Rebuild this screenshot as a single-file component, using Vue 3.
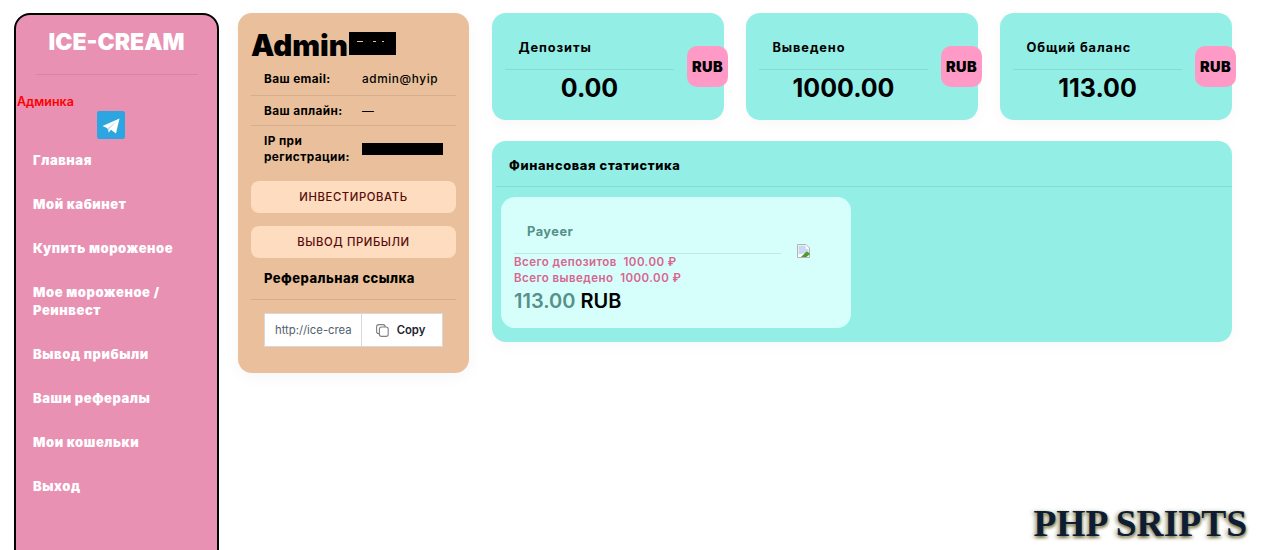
<script setup>
// Dashboard of the ICE-CREAM cabinet
const menu = [
  'Главная',
  'Мой кабинет',
  'Купить мороженое',
  'Мое мороженое / Реинвест',
  'Вывод прибыли',
  'Ваши рефералы',
  'Мои кошельки',
  'Выход',
];

const totals = [
  { label: 'Депозиты', value: '0.00' },
  { label: 'Выведено', value: '1000.00' },
  { label: 'Общий баланс', value: '113.00' },
];
</script>

<template>
  <div class="page">
    <aside class="sidebar">
      <div class="logo">ICE-CREAM</div>
      <div class="logo-line"></div>
      <div class="admin-link">Админка</div>
      <div class="tg-wrap">
        <span class="tg">
          <svg viewBox="0 0 28 28" width="28" height="28">
            <path d="M5.500 15 22.500 7.500 19 22.500 14 18.800 11.800 21.500 10.500 17.300Z" fill="#fff" />
            <path d="M10.500 17.300 20 10 12.500 17.800 11.800 21.500Z" fill="#bfdff2" />
          </svg>
        </span>
      </div>
      <nav class="menu">
        <a v-for="item in menu" :key="item" class="menu-item">{{ item }}</a>
      </nav>
    </aside>

    <section class="profile">
      <h2 class="profile-name">Admin<span class="redact-name"></span></h2>
      <div class="info-row first">
        <div class="info-key">Ваш email:</div>
        <div class="info-val">admin@hyip</div>
      </div>
      <div class="info-row">
        <div class="info-key">Ваш аплайн:</div>
        <div class="info-val">—</div>
      </div>
      <div class="info-row last">
        <div class="info-key">IP при регистрации:</div>
        <div class="info-val"><span class="redact-ip"></span></div>
      </div>
      <button class="action">ИНВЕСТИРОВАТЬ</button>
      <button class="action">ВЫВОД ПРИБЫЛИ</button>
      <div class="ref-title">Реферальная ссылка</div>
      <div class="ref-box">
        <div class="ref-group">
          <div class="ref-input">http://ice-crea</div>
          <div class="ref-copy">
            <svg viewBox="0 0 13 13" width="13" height="13" fill="none" stroke="#808080" stroke-width="1.100">
              <rect x="0.600" y="0.600" width="8.500" height="9" rx="2.200" />
              <rect x="3.400" y="3" width="8.800" height="9.400" rx="2.200" fill="#fff" />
            </svg>
            <span>Copy</span>
          </div>
        </div>
      </div>
    </section>

    <main class="content">
      <div class="totals">
        <div v-for="t in totals" :key="t.label" class="total-card">
          <div class="total-label">{{ t.label }}</div>
          <div class="total-value">{{ t.value }}</div>
          <div class="rub-badge">RUB</div>
        </div>
      </div>

      <div class="stats">
        <div class="stats-title">Финансовая статистика</div>
        <div class="stats-body">
          <div class="pay-card">
            <div class="pay-main">
              <div class="pay-name">Payeer</div>
              <div class="pay-line">Всего депозитов&nbsp; 100.00 ₽</div>
              <div class="pay-line">Всего выведено&nbsp; 1000.00 ₽</div>
              <div class="pay-sum"><span class="pay-amount">113.00</span> RUB</div>
            </div>
            <svg class="broken" viewBox="0 0 13 14" width="13" height="14">
              <path d="M.5.5h8.500l3.500 3.500v9.500H.5Z" fill="#fff" stroke="#b4b4b4" />
              <path d="M1.500 1.500h7l.5 3.500h2.500v3.500l-10 2Z" fill="#c9d8f4" />
              <path d="M4 13 9.500 7.500l3 1.500v1.500L9.500 13Z" fill="#4f9a32" />
            </svg>
          </div>
        </div>
      </div>
    </main>

    <div class="watermark">PHP SRIPTS</div>
  </div>
</template>

<style>
html, body {
  margin: 0;
  background: #fff;
  overflow: hidden;
}
</style>

<style scoped>
.page {
  position: relative;
  display: flex;
  align-items: flex-start;
  height: 550px;
  overflow: hidden;
  padding: 13px 33px 0 14px;
  box-sizing: border-box;
  font-family: "Inter", "Liberation Sans", sans-serif;
  color: #000;
}

/* sidebar */
.sidebar {
  flex: none;
  width: 205px;
  height: 600px;
  box-sizing: border-box;
  border: 2px solid #000;
  border-radius: 16px;
  background: #e891b3;
}
.logo {
  margin-top: 14px;
  text-align: center;
  font-size: 23px;
  line-height: 26px;
  font-weight: 900;
  color: #fff;
}
.logo-line {
  height: 1px;
  margin: 19px 19px 0 20px;
  background: rgba(0, 0, 0, 0.08);
}
.admin-link {
  margin-top: 20px;
  padding-left: 1px;
  font-size: 12.500px;
  line-height: 14px;
  font-weight: 600;
  color: #f00;
}
.tg-wrap {
  display: flex;
  justify-content: center;
  margin-top: 2px;
  padding-right: 11px;
}
.tg {
  display: block;
  width: 28px;
  height: 28px;
  border-radius: 2px;
  background: #2ca5e0;
}
.tg svg {
  display: block;
}
.menu {
  display: flex;
  flex-direction: column;
  margin-top: -1px;
}
.menu-item {
  padding: 13px 17px;
  font-size: 13px;
  line-height: 18px;
  font-weight: 900;
  letter-spacing: 0.55px;
  color: #fff;
}

/* profile */
.profile {
  flex: none;
  width: 231px;
  height: 360px;
  margin-left: 19px;
  padding: 0 13px;
  box-sizing: border-box;
  border-radius: 14px;
  background: #e9c09b;
  box-shadow: 0 4px 16px rgba(0, 0, 0, 0.04);
}
.profile-name {
  margin: 17px 0 0;
  height: 34px;
  font-size: 29.500px;
  line-height: 30px;
  font-weight: 900;
  white-space: nowrap;
  display: flex;
  align-items: flex-start;
}
.redact-name {
  display: block;
  flex: none;
  width: 47px;
  height: 23px;
  margin: 2px 0 0 1px;
  background:
    linear-gradient(90deg, transparent 8px, #e9c09b 8px, #e9c09b 14px, transparent 14px, transparent 24px, #e9c09b 24px, #e9c09b 27px, transparent 27px, transparent 33px, #e9c09b 33px, #e9c09b 35px, transparent 35px) 0 9px / 100% 1px no-repeat,
    #000;
}
.info-row {
  display: flex;
  align-items: center;
  padding: 7px 0 6px 13px;
  border-bottom: 1px solid rgba(0, 0, 0, 0.09);
  font-size: 11.800px;
  line-height: 16px;
}
.info-row.first {
  padding-bottom: 8px;
}
.info-row.last {
  padding-bottom: 16px;
  border-bottom: 0;
}
.info-key {
  flex: none;
  width: 98px;
  font-weight: 700;
  letter-spacing: 0.4px;
}
.info-val {
  flex: 1;
  font-weight: 500;
  letter-spacing: 0.6px;
  white-space: nowrap;
}
.redact-ip {
  display: block;
  width: 81px;
  height: 12px;
  background: #000;
}
.action {
  display: block;
  width: 100%;
  height: 32px;
  margin-bottom: 13px;
  border: 0;
  border-radius: 8px;
  background: #fddcbf;
  color: #570b0b;
  font-family: inherit;
  font-size: 11.300px;
  font-weight: 500;
  letter-spacing: 0.6px;
}
.ref-title {
  padding: 0 13px 12px;
  margin-top: -1px;
  border-bottom: 1px solid rgba(0, 0, 0, 0.09);
  font-size: 13px;
  line-height: 17px;
  font-weight: 800;
  letter-spacing: 0.45px;
}
.ref-box {
  padding: 13px 13px 0;
}
.ref-group {
  display: flex;
  height: 34px;
  box-sizing: border-box;
  border: 1px solid #d5d9de;
  background: #fff;
}
.ref-input {
  flex: none;
  width: 97px;
  padding: 0 0 0 10px;
  box-sizing: border-box;
  border-right: 1px solid #d5d9de;
  font-size: 11.300px;
  line-height: 32px;
  color: #51606e;
  white-space: nowrap;
}
.ref-copy {
  flex: 1;
  display: flex;
  align-items: center;
  justify-content: center;
  gap: 8px;
  padding-right: 3px;
  font-size: 11.300px;
  font-weight: 600;
  color: #1b2530;
}

/* right column */
.content {
  flex: 1;
  min-width: 0;
  margin-left: 23px;
}
.totals {
  display: flex;
  gap: 22px;
}
.total-card {
  position: relative;
  flex: 1;
  height: 107px;
  padding: 0 13px;
  box-sizing: border-box;
  border-radius: 14px;
  background: #93eee6;
  box-shadow: 0 4px 16px rgba(0, 0, 0, 0.03);
}
.total-label {
  margin-right: 37px;
  padding: 27px 13px 13px 13.500px;
  border-bottom: 1px solid rgba(0, 0, 0, 0.08);
  font-size: 12.800px;
  line-height: 16px;
  font-weight: 700;
  letter-spacing: 0.9px;
  white-space: nowrap;
}
.total-value {
  margin-right: 37px;
  padding-top: 3px;
  text-align: center;
  font-size: 25px;
  line-height: 30px;
  font-weight: 700;
}
.rub-badge {
  position: absolute;
  top: 33px;
  right: -4px;
  width: 41px;
  height: 41px;
  display: flex;
  align-items: center;
  justify-content: center;
  border-radius: 10px;
  background: #fe9ac5;
  font-size: 14.500px;
  font-weight: 900;
  letter-spacing: 0.4px;
}
.stats {
  height: 201px;
  margin-top: 21px;
  box-sizing: border-box;
  border-radius: 14px;
  background: #93eee6;
  box-shadow: 0 4px 16px rgba(0, 0, 0, 0.03);
}
.stats-title {
  height: 46px;
  padding: 17px 17px 0 13px;
  margin-left: 4px;
  box-sizing: border-box;
  border-bottom: 1px solid rgba(0, 0, 0, 0.08);
  font-size: 12.800px;
  line-height: 16px;
  font-weight: 800;
  letter-spacing: 0.65px;
}
.stats-body {
  padding: 10px 9px 0;
}
.pay-card {
  display: flex;
  align-items: flex-start;
  width: 350px;
  height: 131px;
  box-sizing: border-box;
  padding: 0 13px;
  border-radius: 14px;
  background: #d6fffb;
}
.pay-main {
  flex: none;
  width: 267px;
}
.pay-name {
  height: 57px;
  padding: 27px 13px 0;
  box-sizing: border-box;
  border-bottom: 1px solid rgba(0, 0, 0, 0.09);
  font-size: 12.800px;
  line-height: 16px;
  font-weight: 700;
  letter-spacing: 0.5px;
  color: #57908a;
}
.pay-line {
  font-size: 11.500px;
  line-height: 16px;
  font-weight: 600;
  letter-spacing: 0.45px;
  color: #d9648f;
  white-space: nowrap;
}
.pay-sum {
  margin-top: 3px;
  font-size: 20px;
  line-height: 24px;
  font-weight: 600;
}
.pay-amount {
  color: #57908a;
}
.broken {
  flex: none;
  margin: 47px 0 0 16px;
}
.watermark {
  position: absolute;
  right: 18px;
  bottom: 6px;
  font-family: "Liberation Serif", serif;
  font-size: 37.500px;
  line-height: 40px;
  font-weight: 700;
  color: #0e1d33;
  white-space: nowrap;
  text-shadow: 1px 2px 3px rgba(110, 105, 50, 0.8), -2px 1px 4px rgba(110, 105, 50, 0.6);
}
</style>
